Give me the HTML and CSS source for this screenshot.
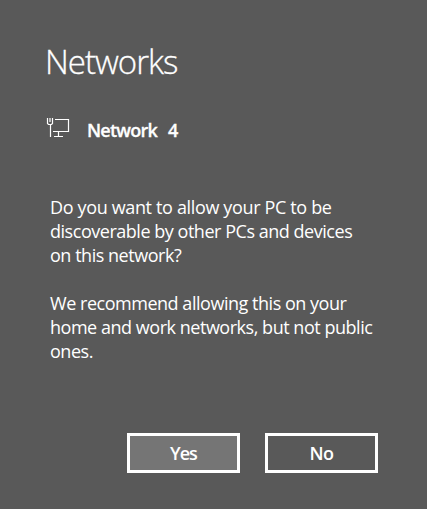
FILE: index.html
```html
<!DOCTYPE html>
<html lang="en">
<head>
    <meta charset="UTF-8">
    <meta name="viewport" content="width=device-width, initial-scale=1.0">
    <title>Networks</title>
    <link rel="stylesheet" href="styles.css">
</head>
<body>
    <div class="network-panel">
        <h1>Networks</h1>

        <div class="network-name">
            <svg class="network-icon" width="24" height="22" viewBox="0 0 24 22" fill="none" stroke="#fff">
                <!-- cable plug -->
                <path d="M1.5 1v5.5l1 1h3l1-1V1M4 1v4M4.5 7v13" stroke-width="1.2"/>
                <!-- monitor -->
                <path d="M9 2.500h13.500v12H7M12.500 14.500v5M8 19.500h9" stroke-width="1.2"/>
            </svg>
            <h2>Network&nbsp; 4</h2>
        </div>

        <div class="message">
            <p>
                <span class="line line-loose">Do you want to allow your PC to be</span>
                <span class="line">discoverable by other PCs and devices</span>
                <span class="line">on this network?</span>
            </p>
            <p>
                <span class="line">We recommend allowing this on your</span>
                <span class="line">home and work networks, but not public</span>
                <span class="line">ones.</span>
            </p>
        </div>

        <div class="actions">
            <button type="button" class="btn btn-yes">Yes</button>
            <button type="button" class="btn">No</button>
        </div>
    </div>
</body>
</html>
```
FILE: styles.css
```css
* {
    box-sizing: border-box;
    margin: 0;
    padding: 0;
    font-family: 'Segoe UI', 'Open Sans', 'Noto Sans', sans-serif;
}

body {
    background-color: #595959;
    color: #fff;
}

.network-panel {
    height: 509px;
    padding: 40px 49px 36px 46px;
    display: flex;
    flex-direction: column;
}

h1 {
    font-size: 33px;
    font-weight: 300;
    line-height: 44px;
    letter-spacing: -1px;
    margin-left: -1px;
    -webkit-text-stroke: 0.3px #fff;
}

.network-name {
    display: flex;
    align-items: flex-start;
    margin-top: 33px;
    height: 26px;
}

.network-icon {
    margin-right: 17px;
}

h2 {
    font-size: 18px;
    font-weight: 600;
    line-height: 26px;
    letter-spacing: -0.75px;
    word-spacing: 1.5px;
    -webkit-text-stroke: 0.3px #fff;
}

.message {
    margin-top: 52px;
    padding-left: 4px;
}

.message p {
    font-size: 18px;
    line-height: 24px;
    margin-bottom: 24px;
}

.line {
    display: block;
    white-space: nowrap;
    letter-spacing: -0.47px;
}

.line-loose {
    letter-spacing: -0.35px;
}

.actions {
    display: flex;
    justify-content: flex-end;
    gap: 25px;
    margin-top: auto;
}

.btn {
    width: 113px;
    height: 40px;
    border: 3px solid #fff;
    background-color: transparent;
    color: #fff;
    font-size: 18px;
    font-weight: 600;
    line-height: 34px;
    letter-spacing: -0.6px;
    cursor: pointer;
}

.btn-yes {
    background-color: #757575;
    letter-spacing: -1px;
}
```
